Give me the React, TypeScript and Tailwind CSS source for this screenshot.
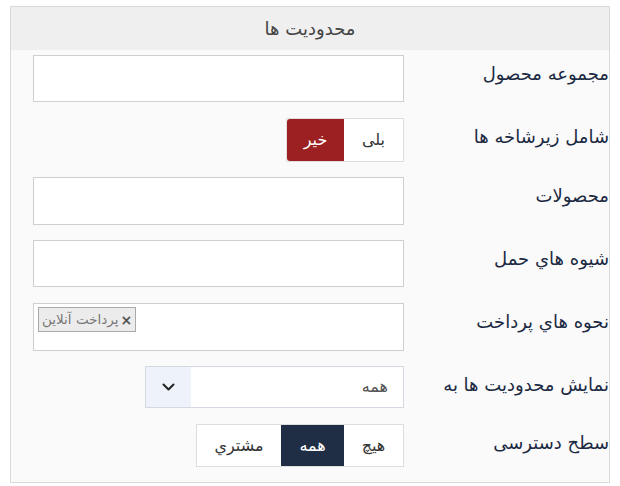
import React from "react";

const font = { fontFamily: '"DejaVu Sans", "Noto Sans", sans-serif' };

function Label({ children }: { children: React.ReactNode }) {
  return (
    <div className="w-[205px] shrink-0 pt-[7px] text-right text-[18px] leading-[24px] text-[#1b2942] whitespace-nowrap overflow-hidden">
      {children}
    </div>
  );
}

export default function App() {
  return (
    <div className="bg-white w-[620px] h-[486px] pt-[6px] pl-[10px]" style={font}>
      <div dir="rtl" className="w-[600px] border border-[#d9d9d9] bg-[#fafafa]">
        <div className="h-[43px] bg-[#efefef] flex items-center justify-center text-[18px] text-[#444]">
          محدودیت ها
        </div>
        <div className="pt-[5px] pl-[22px]">
          {/* row 1 */}
          <div className="flex mb-[16px]">
            <Label>مجموعه محصول</Label>
            <div className="w-[371px] h-[47px] bg-white border border-[#cfcfcf]" />
          </div>
          {/* row 2 */}
          <div className="flex mb-[15px]">
            <Label>شامل زیرشاخه ها</Label>
            <div className="w-[371px] flex">
              <div className="flex h-[44px] border border-[#dedede] bg-white">
                <div className="w-[59px] flex items-center justify-center text-[16px] text-[#333]">بلی</div>
                <div className="w-[57px] flex items-center justify-center text-[16px] text-white bg-[#9c1f21] rounded-l-[3px]">خیر</div>
              </div>
            </div>
          </div>
          {/* row 3 */}
          <div className="flex mb-[15px]">
            <Label>محصولات</Label>
            <div className="w-[371px] h-[48px] bg-white border border-[#cfcfcf]" />
          </div>
          {/* row 4 */}
          <div className="flex mb-[16px]">
            <Label>شیوه هاي حمل</Label>
            <div className="w-[371px] h-[47px] bg-white border border-[#cfcfcf]" />
          </div>
          {/* row 5 */}
          <div className="flex mb-[15px]">
            <Label>نحوه هاي پرداخت</Label>
            <div dir="ltr" className="w-[371px] h-[48px] bg-white border border-[#cfcfcf] pl-[4px] pt-[3px]">
              <div dir="rtl" className="inline-flex items-center h-[25px] px-[3px] gap-[2px] bg-[#ececec] border border-[#aaa] text-[13.5px] text-[#777]">
                <span className="text-[#555] text-[14px] font-bold leading-none">×</span>
                <span>پرداخت آنلاین</span>
              </div>
            </div>
          </div>
          {/* row 6 */}
          <div className="flex mb-[16px]">
            <Label>نمایش محدودیت ها به</Label>
            <div className="w-[371px] flex">
              <div className="flex w-[259px] h-[42px] border border-[#d4d8e0] bg-white">
                <div className="flex-1 flex items-center pr-[15px] text-[16px] text-[#555]">همه</div>
                <div className="w-[45px] flex items-center justify-center bg-[#eef3fb]">
                  <svg width="13" height="8" viewBox="0 0 13 8">
                    <polyline points="1.5,1.5 6.5,6.5 11.5,1.5" fill="none" stroke="#222" strokeWidth="2" strokeLinecap="round" strokeLinejoin="round" />
                  </svg>
                </div>
              </div>
            </div>
          </div>
          {/* row 7 */}
          <div className="flex mb-[15px]">
            <Label>سطح دسترسی</Label>
            <div className="w-[371px] flex">
              <div className="flex h-[43px] border border-[#dedede] bg-white">
                <div className="w-[59px] flex items-center justify-center text-[16px] text-[#333]">هیچ</div>
                <div className="w-[63px] flex items-center justify-center text-[16px] text-white bg-[#1f2d45]">همه</div>
                <div className="w-[84px] flex items-center justify-center text-[16px] text-[#333]">مشتري</div>
              </div>
            </div>
          </div>
        </div>
      </div>
    </div>
  );
}
